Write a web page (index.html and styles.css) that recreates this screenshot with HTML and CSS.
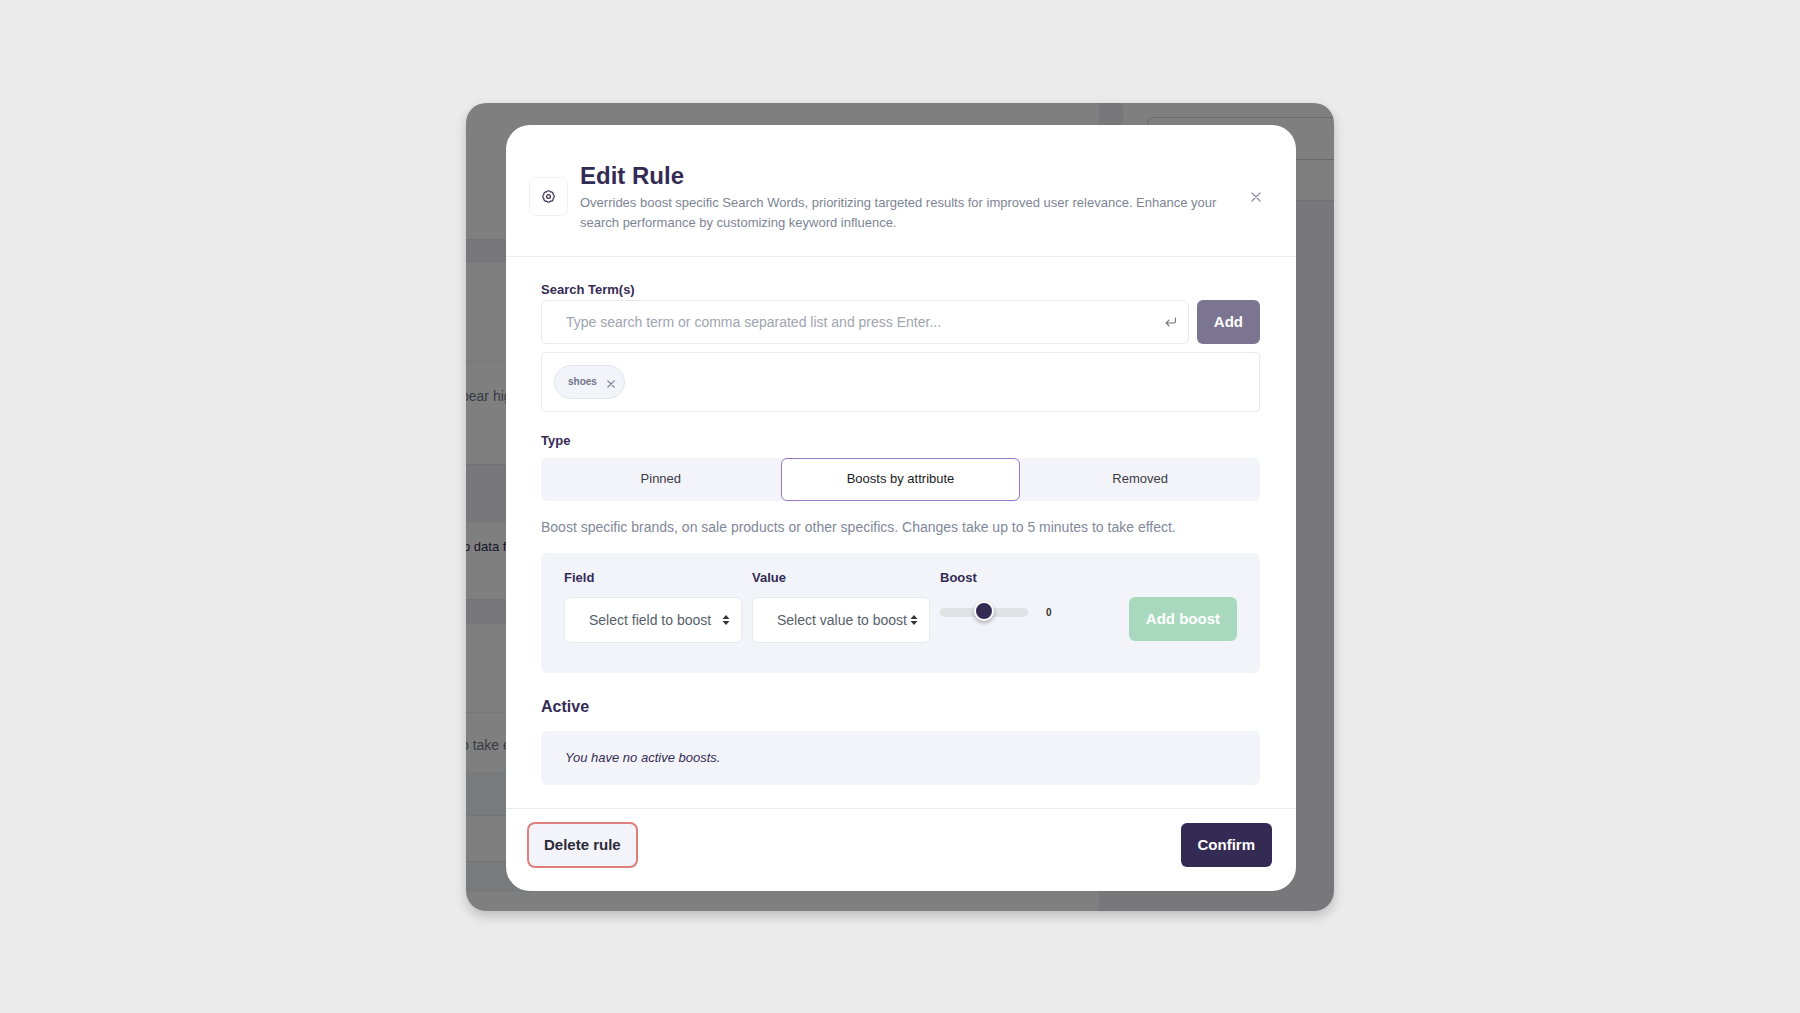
FILE: index.html
```html
<!DOCTYPE html>
<html lang="en">
<head>
<meta charset="utf-8">
<meta name="viewport" content="width=device-width, initial-scale=1">
<title>Edit Rule</title>
<link rel="stylesheet" href="styles.css">
</head>
<body>
<main class="window">
  <div class="page">
    <div class="page-main">
      <section class="card card-top"></section>
      <section class="card card-rules">
        <div class="card-head"></div>
        <p class="card-note">pear high</p>
      </section>
      <div class="band"></div>
      <section class="card card-empty"><p class="card-note card-note-dark">o data f</p></section>
      <section class="card card-list">
        <div class="card-title"></div>
        <p class="card-note">o take e</p>
        <div class="list-head"></div>
        <div class="list-row"></div>
        <div class="list-foot"></div>
      </section>
    </div>
    <aside class="page-side">
      <section class="card side-card"><div class="side-field"></div></section>
    </aside>
  </div>

  <div class="overlay">
    <section class="modal" role="dialog" aria-labelledby="modal-title">
      <header class="modal-header">
        <span class="modal-icon">
          <svg width="15" height="15" viewBox="0 0 15 15" fill="none" stroke="currentColor" stroke-width="1.2" stroke-linejoin="round" aria-hidden="true">
            <path d="M12.120 9.410A2.200 2.200 0 0 1 9.410 12.120A2.200 2.200 0 0 1 5.590 12.120A2.200 2.200 0 0 1 2.880 9.410A2.200 2.200 0 0 1 2.880 5.590A2.200 2.200 0 0 1 5.590 2.880A2.200 2.200 0 0 1 9.410 2.880A2.200 2.200 0 0 1 12.120 5.590A2.200 2.200 0 0 1 12.120 9.410z"/>
            <circle cx="7.500" cy="7.500" r="1.900"/>
          </svg>
        </span>
        <div class="modal-heading">
          <h1 id="modal-title">Edit Rule</h1>
          <p>Overrides boost specific Search Words, prioritizing targeted results for improved user relevance. Enhance your search performance by customizing keyword influence.</p>
        </div>
        <button class="close" type="button" aria-label="Close">
          <svg width="10" height="10" viewBox="0 0 10 10" stroke="currentColor" stroke-width="1.200" stroke-linecap="round" aria-hidden="true"><path d="M1 1l8 8M9 1L1 9"/></svg>
        </button>
      </header>

      <div class="modal-body">
        <label class="label" for="term">Search Term(s)</label>
        <div class="term-row">
          <div class="term-field">
            <input id="term" type="text" placeholder="Type search term or comma separated list and press Enter...">
            <svg class="enter" width="12" height="10" viewBox="0 0 12 10" fill="none" stroke="currentColor" stroke-width="1.100" stroke-linecap="round" stroke-linejoin="round" aria-hidden="true"><path d="M10.500 1v3.500a1.500 1.500 0 0 1-1.500 1.500H1.200M4 3.200L1.200 6L4 8.800"/></svg>
          </div>
          <button class="btn btn-add" type="button">Add</button>
        </div>
        <div class="tags">
          <span class="tag">shoes
            <button type="button" aria-label="Remove shoes"><svg width="8" height="8" viewBox="0 0 8 8" stroke="currentColor" stroke-width="1.100" stroke-linecap="round" aria-hidden="true"><path d="M.8.8l6.400 6.400M7.200.8L.8 7.200"/></svg></button>
          </span>
        </div>

        <h2 class="label label-type">Type</h2>
        <div class="segments">
          <button type="button">Pinned</button>
          <button type="button" class="selected" aria-pressed="true">Boosts by attribute</button>
          <button type="button">Removed</button>
        </div>
        <p class="hint">Boost specific brands, on sale products or other specifics. Changes take up to 5 minutes to take effect.</p>

        <div class="panel boost-form">
          <div class="field">
            <label class="label" for="field">Field</label>
            <div class="select">
              <select id="field"><option>Select field to boost</option></select>
              <svg width="8" height="10" viewBox="0 0 8 10" fill="currentColor" aria-hidden="true"><path d="M4 0l3.500 4h-7zM4 10L.5 6h7z"/></svg>
            </div>
          </div>
          <div class="field">
            <label class="label" for="value">Value</label>
            <div class="select">
              <select id="value"><option>Select value to boost</option></select>
              <svg width="8" height="10" viewBox="0 0 8 10" fill="currentColor" aria-hidden="true"><path d="M4 0l3.500 4h-7zM4 10L.5 6h7z"/></svg>
            </div>
          </div>
          <div class="field field-boost">
            <label class="label" for="boost">Boost</label>
            <div class="slider">
              <input id="boost" type="range" min="-10" max="10" value="0">
              <output for="boost">0</output>
            </div>
          </div>
          <button class="btn btn-boost" type="button">Add boost</button>
        </div>

        <h2 class="subtitle">Active</h2>
        <p class="panel empty">You have no active boosts.</p>
      </div>

      <footer class="modal-footer">
        <button class="btn btn-delete" type="button">Delete rule</button>
        <button class="btn btn-confirm" type="button">Confirm</button>
      </footer>
    </section>
  </div>
</main>
</body>
</html>
```

FILE: styles.css
```css
:root {
  --ink: #342b55;
  --muted: #7d8494;
  --line: #e6e9ee;
  --panel: #f3f4f9;
}

* { box-sizing: border-box; }

body {
  margin: 0;
  min-height: 100vh;
  display: flex;
  align-items: center;
  justify-content: center;
  background: #ebebeb;
  color: var(--ink);
  font: 13px/20px "Liberation Sans", Arial, sans-serif;
}

h1, h2, p { margin: 0; }
button, input, select { font: inherit; }
button { cursor: pointer; }
svg { display: block; }

.window {
  position: relative;
  width: 100%;
  max-width: 868px;
  overflow: hidden;
  border-radius: 20px;
  box-shadow: 0 5px 12px rgba(0, 0, 0, .2);
}

/* Page behind the dialog */
.page {
  position: absolute;
  inset: 0;
  display: flex;
  gap: 24px;
  background: #f0f1f5;
}
.page-main { flex: 1; }
.page-side { width: 211px; }
.card { background: #fff; box-shadow: 0 1px 2px rgba(0, 0, 0, .08); }
.card-top { height: 136px; margin-bottom: 24px; }
.card-rules { height: 201px; }
.card-head { height: 99px; border-bottom: 1px solid #eef0f3; }
.card-note { margin-left: -5px; padding-top: 24px; font-size: 14px; color: #6e7585; white-space: nowrap; }
.card-note-dark { margin-left: -3px; font-size: 13px; color: var(--ink); padding-top: 14px; }
.band { height: 59px; }
.card-empty { height: 76px; margin-bottom: 25px; }
.card-title { height: 89px; border-bottom: 1px solid #eef0f3; }
.card-list .card-note { padding-top: 22px; }
.list-head { height: 44px; margin-top: 17px; background: #f2f5f7; border-bottom: 1px solid #e6e9ec; }
.list-row { height: 46px; border-bottom: 1px solid #dfe2e5; }
.list-foot { height: 30px; background: #f2f5f7; }
.card-list { height: 287px; }
.side-card { height: 97px; padding: 14px 0 0 24px; }
.side-field { height: 43px; border: 1px solid #d5d5d8; border-right: 0; border-radius: 6px 0 0 6px; }

.overlay {
  position: relative;
  padding: 22px 38px 20px 40px;
  background: rgba(0, 0, 0, .5);
}

.modal {
  border-radius: 24px;
  background: #fff;
}

.modal-header {
  display: flex;
  align-items: center;
  gap: 12px;
  padding: 36px 32px 23px 23px;
  border-bottom: 1px solid #eceef2;
}
.modal-icon {
  display: grid;
  place-items: center;
  width: 39px;
  height: 39px;
  border: 1px solid #f0f1f4;
  border-radius: 7px;
}
.modal-heading { flex: 1; color: var(--muted); }
.modal-heading h1 {
  margin-bottom: 2px;
  font-size: 24px;
  line-height: 30px;
  color: var(--ink);
}
.modal-heading p { max-width: 650px; }
.close {
  display: grid;
  place-items: center;
  width: 16px;
  height: 16px;
  padding: 0;
  border: 0;
  background: none;
  color: #8b8b9d;
}

.modal-body { padding: 24px 36px 23px 35px; }
.label {
  display: block;
  font-size: 13px;
  line-height: 18px;
  font-weight: bold;
  color: var(--ink);
}

.term-row { display: flex; gap: 8px; margin-top: 1px; }
.term-field { position: relative; flex: 1; }
.term-field input {
  width: 100%;
  height: 44px;
  padding: 0 48px 0 24px;
  border: 1px solid var(--line);
  border-radius: 6px;
  font-size: 14px;
  color: var(--ink);
}
.term-field input::placeholder { color: #a0a5b1; }
.enter { position: absolute; right: 12px; top: 17px; color: #6e7180; }

.btn {
  height: 44px;
  padding: 0 17px;
  border: 0;
  border-radius: 6px;
  font-size: 15px;
  font-weight: bold;
  color: #fff;
}
.btn-add { background: #7c7592; }

.tags {
  margin-top: 8px;
  padding: 12px;
  border: 1px solid var(--line);
  border-radius: 4px;
}
.tag {
  display: inline-flex;
  align-items: center;
  gap: 10px;
  height: 34px;
  padding: 0 9px 0 13px;
  border: 1px solid #e1e4ec;
  border-radius: 17px;
  background: var(--panel);
  font-size: 10px;
  font-weight: bold;
  color: #717589;
  vertical-align: top;
}
.tag button { padding: 4px 0 0; border: 0; background: none; color: #717589; }

.label-type { margin-top: 20px; }
.segments {
  display: grid;
  grid-template-columns: repeat(3, 1fr);
  margin-top: 8px;
  border-radius: 6px;
  background: var(--panel);
}
.segments button {
  height: 43px;
  padding: 0;
  border: 1px solid transparent;
  border-radius: 6px;
  background: none;
  color: #3c3c44;
}
.segments .selected { border-color: #9a76c8; background: #fff; color: #1c1c22; }
.hint { margin-top: 16px; font-size: 14px; color: #7f879b; }

.panel { border-radius: 6px; background: var(--panel); }
.boost-form {
  display: flex;
  align-items: flex-start;
  gap: 10px;
  margin-top: 16px;
  padding: 16px 23px 30px;
}
.field .label { margin-bottom: 10px; }
.select { position: relative; }
.select select {
  appearance: none;
  width: 178px;
  height: 46px;
  padding: 0 20px 0 24px;
  border: 1px solid var(--line);
  border-radius: 6px;
  background: #fff;
  font-size: 14px;
  color: #56606b;
}
.select svg { position: absolute; right: 12px; top: 18px; color: #333; pointer-events: none; }

.field-boost { flex: 1; }
.slider { display: flex; align-items: center; gap: 18px; height: 32px; }
.slider input {
  appearance: none;
  width: 88px;
  height: 20px;
  margin: 0;
  background: none;
}
.slider input::-webkit-slider-runnable-track {
  height: 9px;
  border-radius: 5px;
  background: #e0e3e6;
}
.slider input::-webkit-slider-thumb {
  appearance: none;
  width: 20px;
  height: 20px;
  margin-top: -7px;
  border: 2px solid #fff;
  border-radius: 50%;
  background: var(--ink);
  box-shadow: 0 2px 4px rgba(0, 0, 0, .3);
}
.slider output { font-size: 10px; font-weight: bold; color: #333; }
.btn-boost { margin-top: 28px; background: #a8d8bd; }

.subtitle { margin-top: 22px; font-size: 16px; line-height: 24px; }
.empty { margin-top: 12px; padding: 17px 24px; font-style: italic; }

.modal-footer {
  display: flex;
  align-items: center;
  justify-content: space-between;
  padding: 13px 24px 23px 21px;
  border-top: 1px solid var(--line);
}
.btn-delete {
  height: 46px;
  padding: 0 15px;
  border: 2px solid #e07e7e;
  border-radius: 8px;
  background: var(--panel);
  color: #2b2b38;
}
.btn-confirm { background: var(--ink); }
```
